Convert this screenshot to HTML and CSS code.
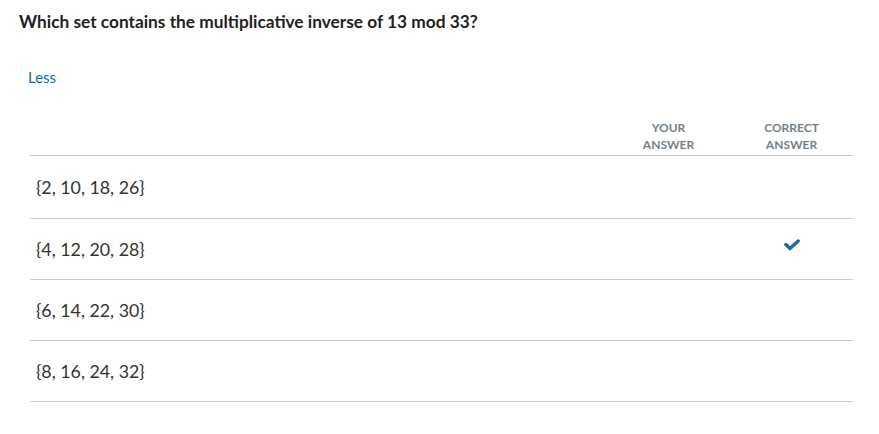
FILE: index.html
```html
<!DOCTYPE html>
<html>
<head>
<meta charset="utf-8">
<link rel="stylesheet" href="styles.css">
</head>
<body>
<div class="page">
  <h1 class="question">Which set contains the multiplicative inverse of 13 mod 33?</h1>
  <a class="less" href="#">Less</a>
  <div class="table">
    <div class="row head">
      <div class="opt"></div>
      <div class="col">YOUR<br>ANSWER</div>
      <div class="col">CORRECT<br>ANSWER</div>
    </div>
    <div class="row first">
      <div class="opt">{2, 10, 18, 26}</div>
      <div class="col"></div>
      <div class="col"></div>
    </div>
    <div class="row">
      <div class="opt">{4, 12, 20, 28}</div>
      <div class="col"></div>
      <div class="col"><svg class="check" width="16" height="12" viewBox="0 0 16 12"><path d="M1.8 5.6 L6 9.6 L14.2 2" fill="none" stroke="#1c6aa3" stroke-width="3.4" stroke-linecap="round" stroke-linejoin="round"/></svg></div>
    </div>
    <div class="row">
      <div class="opt">{6, 14, 22, 30}</div>
      <div class="col"></div>
      <div class="col"></div>
    </div>
    <div class="row">
      <div class="opt">{8, 16, 24, 32}</div>
      <div class="col"></div>
      <div class="col"></div>
    </div>
  </div>
</div>
</body>
</html>
```
FILE: styles.css
```css
html, body {
  margin: 0;
  padding: 0;
  background: #fff;
}
body {
  font-family: Lato, "Open Sans", sans-serif;
  color: #2d3b45;
}
.page {
  padding: 10px 0 0 19px;
}
.question {
  margin: 0;
  font-size: 17.3px;
  line-height: 24px;
  font-weight: 700;
  color: #222;
}
.less {
  display: block;
  margin: 34px 0 0 9px;
  font-size: 15px;
  line-height: 18px;
  color: #0770a3;
  text-decoration: none;
}
.table {
  margin: 33px 0 0 11px;
  width: 823px;
}
.row {
  box-sizing: border-box;
  display: grid;
  grid-template-columns: 1fr 123px 123px;
  align-items: center;
  height: 61px;
  border-bottom: 1px solid #c7cdd1;
}
.row.first {
  height: 63px;
}
.row.head {
  height: auto;
  padding-bottom: 2px;
}
.head .col {
  font-size: 12px;
  line-height: 17px;
  font-weight: 700;
  color: #73818a;
  text-align: center;
}
.opt {
  padding-left: 6px;
  font-size: 17.8px;
  color: #333;
}
.col {
  text-align: center;
}
.check {
  display: block;
  margin: 0 auto;
  position: relative;
  top: -4px;
}
```
